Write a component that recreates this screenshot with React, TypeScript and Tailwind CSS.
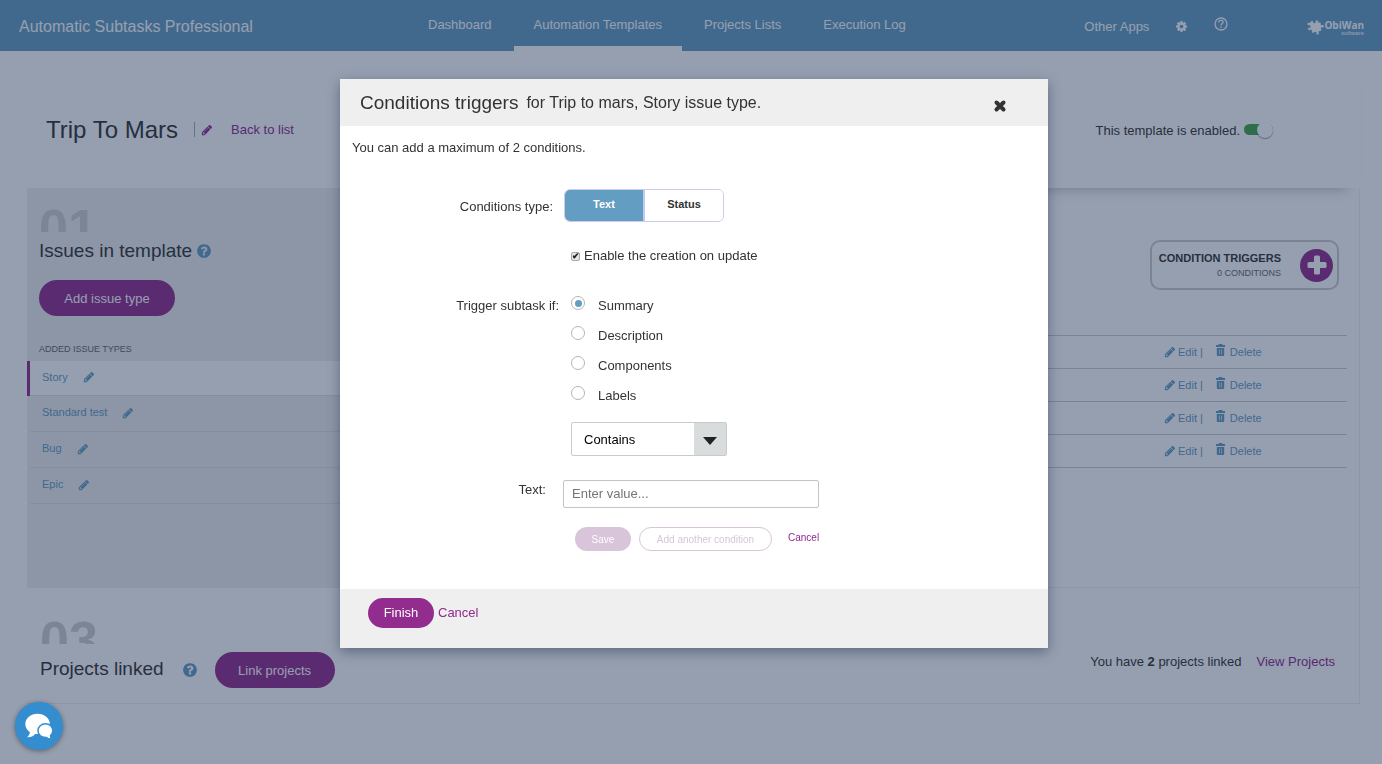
import { useState } from 'react'

const NAV_ITEMS = ['Dashboard', 'Automation Templates', 'Projects Lists', 'Execution Log']
const ISSUE_TYPES = ['Story', 'Standard test', 'Bug', 'Epic']
const TRIGGER_FIELDS = ['Summary', 'Description', 'Components', 'Labels']
const SUBTASK_ROWS = [1, 2, 3, 4]

const ICONS = {
  pencil:
    'M491 1536l91-91-235-235-91 91v107h128v128h107zm523-928q0-22-22-22-10 0-17 7l-542 542q-7 7-7 17 0 22 22 22 10 0 17-7l542-542q7-7 7-17zm-54-192l416 416-832 832h-416v-416zm683 96q0 53-37 90l-166 166-416-416 166-165q36-38 90-38 53 0 91 38l235 234q37 39 37 91z',
  question:
    'M1024 1376v-192q0-14-9-23t-23-9h-192q-14 0-23 9t-9 23v192q0 14 9 23t23 9h192q14 0 23-9t9-23zm256-672q0-88-55.5-163t-138.5-116-170-41q-243 0-371 213-15 24 8 42l132 100q7 6 19 6 16 0 25-12 53-68 86-92 34-24 86-24 48 0 85.5 26t37.5 59q0 38-20 61t-68 45q-63 28-115.5 86.5t-52.5 125.5v36q0 14 9 23t23 9h192q14 0 23-9t9-23q0-19 21.5-49.5t54.5-49.5q32-18 49-28.5t46-35 44.5-48 28-60.5 12.5-81zm384 192q0 209-103 385.5t-279.5 279.5-385.5 103-385.5-103-279.5-279.5-103-385.5 103-385.5 279.5-279.5 385.5-103 385.5 103 279.5 279.5 103 385.5z',
  cog: 'M1152 896q0-106-75-181t-181-75-181 75-75 181 75 181 181 75 181-75 75-181zm512-109v222q0 12-8 23t-20 13l-185 28q-19 54-39 91 35 50 107 138 10 12 10 25t-9 23q-27 37-99 108t-94 71q-12 0-26-9l-138-108q-44 23-91 38-16 136-29 186-7 28-36 28h-222q-14 0-24.5-8.5t-11.5-21.5l-28-184q-49-16-90-37l-141 107q-10 9-25 9-14 0-25-11-126-114-165-168-7-10-7-23 0-12 8-23 15-21 51-66.5t54-70.5q-27-50-41-99l-183-27q-13-2-21-12.5t-8-23.5v-222q0-12 8-23t19-13l186-28q14-46 39-92-40-57-107-138-10-12-10-24 0-10 9-23 26-36 98.5-107.5t94.5-71.5q13 0 26 10l138 107q44-23 91-38 16-136 29-186 7-28 36-28h222q14 0 24.5 8.5t11.5 21.5l28 184q49 16 90 37l142-107q9-9 24-9 13 0 25 10 129 119 165 170 7 8 7 22 0 12-8 23-15 21-51 66.5t-54 70.5q26 50 41 98l183 28q13 2 21 12.5t8 23.5z',
}

interface IconProps {
  name: keyof typeof ICONS
  size: number
  className?: string
}

const Icon = ({ name, size, className }: IconProps) => (
  <svg width={size} height={size} viewBox="0 0 1792 1792" fill="currentColor" className={className}>
    <path d={ICONS[name]} />
  </svg>
)

const TrashIcon = () => (
  <svg width="9" height="12" viewBox="0 0 9 12" fill="currentColor" className="mb-1">
    <path d="M3 0h3l.6 1H9v2H0V1h2.400z" />
    <path d="M.8 4h7.400v7q0 1-1 1H1.800q-1 0-1-1zM3 5.500v5h.6v-5zm2.400 0v5H6v-5z" fillRule="evenodd" />
  </svg>
)

const Logo = () => (
  <div className="ml-[79px] flex items-center pt-1">
    <svg width="17" height="15" viewBox="0 0 17 15" fill="currentColor">
      <path d="M4 1.500c1-.9 2.300-.4 2.200.8 0 .7.300 1.100 1 .9l1.600-.6c-.4-1.500.3-2.400 1.300-2.300 1.100.1 1.300 1.200.9 2.300l2.600-.2.200 2.300c.2.700.8.700 1.400.4 1.100-.4 1.900.3 1.700 1.400-.2 1-1.300 1.200-2.100.9-.7-.2-1 .2-.9.800l.7 2.400-2.600.6c-.7.3-.6.900-.3 1.500.5 1.100-.1 1.900-1 1.900-1.100.1-1.500-1-1.200-2 .1-.7-.3-1-.9-.8L5.500 13 4.600 10c-.3-.7-.8-.5-1.300-.1-1 .8-2.200.3-2.300-.8-.1-1 .9-1.500 1.800-1.400.7 0 .9-.4.700-1L2.900 5.100C1.500 5.700.3 5 .4 3.900c.1-.9 1-1.200 1.900-1 .9.200 1.100-.8 1.700-1.400z" />
    </svg>
    <div className="flex flex-col items-end">
      <span className="font-['Open_Sans','Liberation_Sans',sans-serif] text-[10px] font-bold leading-[10px]">ObiWan</span>
      <span className="text-[6px] leading-[6px]">software</span>
    </div>
  </div>
)

const Header = () => (
  <header className="flex h-[51px] items-center bg-[#649dc2] text-[13px] text-white">
    <div className="w-[408px] shrink-0 pl-[19px] pt-0.5 text-base">Automatic Subtasks Professional</div>
    <nav className="flex h-full gap-0.5">
      {NAV_ITEMS.map((item) => (
        <a
          key={item}
          href="#"
          className={`flex items-center whitespace-nowrap border-b-[5px] px-5 pt-1 ${
            item === 'Automation Templates' ? 'border-white' : 'border-transparent'
          }`}
        >
          {item}
        </a>
      ))}
    </nav>
    <div className="ml-auto flex items-center pr-[18px]">
      <a href="#" className="pt-0.5">Other Apps</a>
      <button type="button" aria-label="Settings" className="ml-[26px] pt-0.5">
        <Icon name="cog" size={13} />
      </button>
      <button type="button" aria-label="Help" className="ml-[26px] pb-1">
        <svg width="14" height="14" viewBox="0 0 14 14" fill="none" stroke="currentColor" strokeWidth="1.3">
          <circle cx="7" cy="7" r="6" />
          <path d="M4.900 5.400c0-1.200.9-2 2.100-2s2.100.8 2.100 1.900c0 1.500-2.100 1.600-2.100 3.200M7 9.600v1.400" />
        </svg>
      </button>
      <Logo />
    </div>
  </header>
)

const TemplateBar = () => (
  <div className="flex h-[137px] items-center bg-white pl-[19px] pr-[87px] pt-5 shadow-[0_13px_12px_-12px_rgba(0,0,0,0.25)]">
    <h1 className="text-2xl">Trip To Mars</h1>
    <span className="ml-4 h-[15px] w-px bg-[#aaa]" />
    <button type="button" aria-label="Rename template" className="ml-1.5 text-[#92278f]">
      <Icon name="pencil" size={12} />
    </button>
    <a href="#" className="ml-[18px] text-[#92278f]">Back to list</a>
    <label className="ml-auto flex items-center gap-1 pt-0.5">
      This template is enabled.
      <input
        type="checkbox"
        defaultChecked
        className="mb-0.5 flex h-[11px] w-[29px] appearance-none items-center justify-end rounded-full bg-[#44a64a] before:size-4 before:rounded-full before:bg-white before:shadow-[0_1px_1px_rgba(0,0,0,0.4)]"
      />
    </label>
  </div>
)

const StepNumber = ({ value }: { value: string }) => (
  <div className="h-[30px] overflow-hidden text-[52px] font-bold leading-none text-[#cfcfcf]">{value}</div>
)

const IssuesPanel = () => (
  <div className="w-[26%] shrink-0 bg-[#eee]">
    <div className="px-3 pt-3.5">
      <StepNumber value="01" />
      <h2 className="flex h-[38px] items-center gap-1 text-[19px]">
        Issues in template
        <Icon name="question" size={16} className="text-[#649dc2]" />
      </h2>
      <button type="button" className="mt-2.5 h-9 w-[136px] rounded-full bg-[#922c8f] pt-0.5 text-white">
        Add issue type
      </button>
      <p className="mt-6 text-[9px] leading-[18px] text-[#666]">ADDED ISSUE TYPES</p>
    </div>
    <ul className="mt-[3px] text-[11px] text-[#649dc2]">
      {ISSUE_TYPES.map((type) => (
        <li
          key={type}
          className={`flex border-l-[3px] ${type === 'Story' ? 'h-[35px] border-[#922c8f] bg-white' : 'h-9 border-transparent'}`}
        >
          <div className="flex w-full items-center gap-[15px] border-b border-[#e0e0e0] pb-0.5 pl-3">
            <a href="#">{type}</a>
            <button type="button" aria-label={`Edit ${type}`}>
              <Icon name="pencil" size={12} />
            </button>
          </div>
        </li>
      ))}
    </ul>
  </div>
)

const SubtasksPanel = () => (
  <div className="flex grow flex-col pl-5 pr-3">
    <button
      type="button"
      className="mr-2 mt-[52px] flex h-[50px] w-[189px] items-center justify-between self-end rounded-[10px] border-2 border-[#ccc] px-1"
    >
      <span className="flex w-[125px] flex-col items-end whitespace-nowrap">
        <span className="text-[11px] font-bold leading-4">CONDITION TRIGGERS</span>
        <span className="text-[9px] leading-[14px] text-[#666]">0 CONDITIONS</span>
      </span>
      <span className="flex size-[33px] items-center justify-center rounded-full bg-[#922c8f]">
        <svg width="20" height="20" viewBox="0 0 20 20" fill="white">
          <rect x="7" y="0.500" width="6" height="19" rx="1.500" />
          <rect x="0.500" y="7" width="19" height="6" rx="1.500" />
        </svg>
      </span>
    </button>
    <table className="mt-[45px] w-full border-t border-[#ccc] text-[11px] text-[#649dc2]">
      <tbody>
        {SUBTASK_ROWS.map((row) => (
          <tr key={row} className="h-[33px] border-b border-[#ccc]">
            <td />
            <td className="w-[183px]">
              <div className="flex items-center">
                <a href="#" className="flex items-center gap-0.5">
                  <Icon name="pencil" size={12} />
                  Edit
                </a>
                <span className="ml-[3px]">|</span>
                <a href="#" className="ml-[13px] flex items-center gap-[5px]">
                  <TrashIcon />
                  Delete
                </a>
              </div>
            </td>
          </tr>
        ))}
      </tbody>
    </table>
  </div>
)

const ProjectsSection = () => (
  <section className="flex h-[116px] items-center justify-between border-t border-[#eee] pl-[13px] pr-6">
    <div className="pt-2.5">
      <StepNumber value="03" />
      <div className="flex items-center pt-2">
        <h2 className="text-[19px]">Projects linked</h2>
        <Icon name="question" size={16} className="ml-[18px] text-[#649dc2]" />
        <button type="button" className="ml-[17px] h-9 w-[120px] rounded-full bg-[#922c8f] pt-0.5 text-white">
          Link projects
        </button>
      </div>
    </div>
    <p className="pt-8">
      You have <b>2</b> projects linked
      <a href="#" className="ml-[15px] text-[#92278f]">View Projects</a>
    </p>
  </section>
)

const ConditionsModal = () => {
  const [type, setType] = useState('Text')
  const [field, setField] = useState('Summary')

  return (
    <div className="fixed inset-0 flex items-start justify-center bg-[#172b4d]/45 pl-1.5 pt-[79px]">
      <div
        role="dialog"
        aria-label="Conditions triggers"
        className="w-[708px] bg-white shadow-[0_4px_12px_rgba(9,30,66,0.4)]"
      >
        {/* Title */}
        <div className="flex h-[47px] items-center bg-[#efefef] pl-5 pr-[41px]">
          <h2 className="pt-0.5 text-[19px]">Conditions triggers</h2>
          <span className="ml-2 text-base">for Trip to mars, Story issue type.</span>
          <button type="button" aria-label="Close" className="ml-auto pt-1.5">
            <svg width="14" height="14" viewBox="0 0 14 14" stroke="#333" strokeWidth="4" strokeLinecap="round">
              <path d="M3.500 3.500l7 7M10.500 3.500l-7 7" />
            </svg>
          </button>
        </div>

        {/* Condition form */}
        <form className="pb-[38px] pt-3" onSubmit={(e) => e.preventDefault()}>
          <p className="pl-3 leading-5">You can add a maximum of 2 conditions.</p>

          <div className="mt-[31px] flex items-center gap-[11px]">
            <span className="w-[213px] pt-0.5 text-right">Conditions type:</span>
            <div className="flex h-[33px] w-40 overflow-hidden rounded-md border border-[#ccccf0]">
              {['Text', 'Status'].map((option) => (
                <button
                  key={option}
                  type="button"
                  onClick={() => setType(option)}
                  className={`flex-1 pb-0.5 text-[11px] font-bold first:border-r-2 first:border-[#c4c8f0] ${
                    type === option ? 'bg-[#649dc2] text-white' : 'bg-white'
                  }`}
                >
                  {option}
                </button>
              ))}
            </div>
          </div>

          <label className="ml-[231px] mt-6 flex w-fit items-center gap-1 leading-5">
            <input
              type="checkbox"
              defaultChecked
              className="flex size-[9px] appearance-none items-center justify-center rounded-xs border border-[#aaa] bg-[#e4e4e4] before:text-[9px] before:font-bold before:leading-none before:text-[#222] checked:before:content-['✔']"
            />
            Enable the creation on update
          </label>

          <fieldset className="mt-[30px] flex gap-3 leading-5">
            <span className="w-[219px] text-right">Trigger subtask if:</span>
            <div className="flex flex-col gap-2.5">
              {TRIGGER_FIELDS.map((name) => (
                <label key={name} className="flex items-start gap-[13px]">
                  <input
                    type="radio"
                    name="field"
                    checked={field === name}
                    onChange={() => setField(name)}
                    className="flex size-[14px] appearance-none items-center justify-center rounded-full border border-[#b5b5b5] before:size-[7px] before:rounded-full checked:before:bg-[#649dc2]"
                  />
                  {name}
                </label>
              ))}
            </div>
          </fieldset>

          <div className="relative ml-[231px] mt-4 h-[34px] w-[156px]">
            <select
              aria-label="Comparison"
              className="size-full appearance-none rounded-xs border border-[#c8cbcb] bg-white pl-3 pt-0.5 text-black"
            >
              <option>Contains</option>
            </select>
            <span className="pointer-events-none absolute inset-y-px right-px flex w-8 items-center justify-center bg-[#d8dcdc] pt-1">
              <svg width="14" height="8" viewBox="0 0 14 8">
                <path d="M0 0h14L7 8z" fill="#222" />
              </svg>
            </span>
          </div>

          <div className="mt-6 flex gap-[17px]">
            <label htmlFor="value" className="w-[206px] text-right leading-5">Text:</label>
            <input
              id="value"
              placeholder="Enter value..."
              className="h-7 w-64 rounded-xs border border-[#c4c4c4] px-2 pb-0.5 placeholder:text-[#757575]"
            />
          </div>

          <div className="ml-[235px] mt-[19px] flex gap-2 text-[10px]">
            <button type="submit" className="h-6 w-14 rounded-full bg-[#d9c5d9] text-white">Save</button>
            <button type="button" className="h-6 w-[133px] rounded-full border border-[#d9c5d9] text-[#d9c5d9]">
              Add another condition
            </button>
            <a href="#" className="ml-2 leading-[22px] text-[#92278f]">Cancel</a>
          </div>
        </form>

        {/* Footer */}
        <div className="flex items-center gap-1 bg-[#efefef] pb-5 pl-7 pt-[9px]">
          <button type="button" className="h-[30px] w-[66px] rounded-full bg-[#922c8f] text-white">Finish</button>
          <a href="#" className="text-[#92278f]">Cancel</a>
        </div>
      </div>
    </div>
  )
}

const ChatButton = () => (
  <button
    type="button"
    aria-label="Chat"
    className="fixed bottom-[14px] left-[15px] flex size-12 items-center justify-center rounded-full bg-[#338dcf] shadow-[0_1px_5px_rgba(0,0,0,0.4)]"
  >
    <svg width="28" height="26" viewBox="0 0 28 26" fill="white">
      <path d="M12.500 0.800C5.800 0.800.3 5.300.3 11c0 3.400 1.800 6.200 4.500 8 .1 1.900-1 3.700-2.600 5.200 3.200.2 6-.9 8-3.300 9 .9 14.700-4 14.700-9.900C24.900 5.300 19.300.8 12.500.8z" />
      <path
        d="M20.500 10.800c-4.200 0-7.500 3-7.500 6.900 0 4.300 3.600 7.300 8.400 6.800 1.400 1.100 3.300 1.600 5.400 1.300-.9-1-1.400-2.100-1.300-3.200 1.500-1.200 2.300-2.900 2.300-4.900 0-3.900-3.100-6.900-7.300-6.900z"
        stroke="#338dcf"
        strokeWidth="1.500"
      />
    </svg>
  </button>
)

const App = () => (
  <div className="min-h-screen bg-white font-['Liberation_Sans',Arial,sans-serif] text-[13px] leading-normal text-[#333]">
    <Header />
    <main className="ml-[27px] mr-[22px]">
      <TemplateBar />
      <div className="border-b border-r border-[#eee]">
        <div className="flex min-h-[399px]">
          <IssuesPanel />
          <SubtasksPanel />
        </div>
        <ProjectsSection />
      </div>
    </main>
    <ConditionsModal />
    <ChatButton />
  </div>
)

export default App
